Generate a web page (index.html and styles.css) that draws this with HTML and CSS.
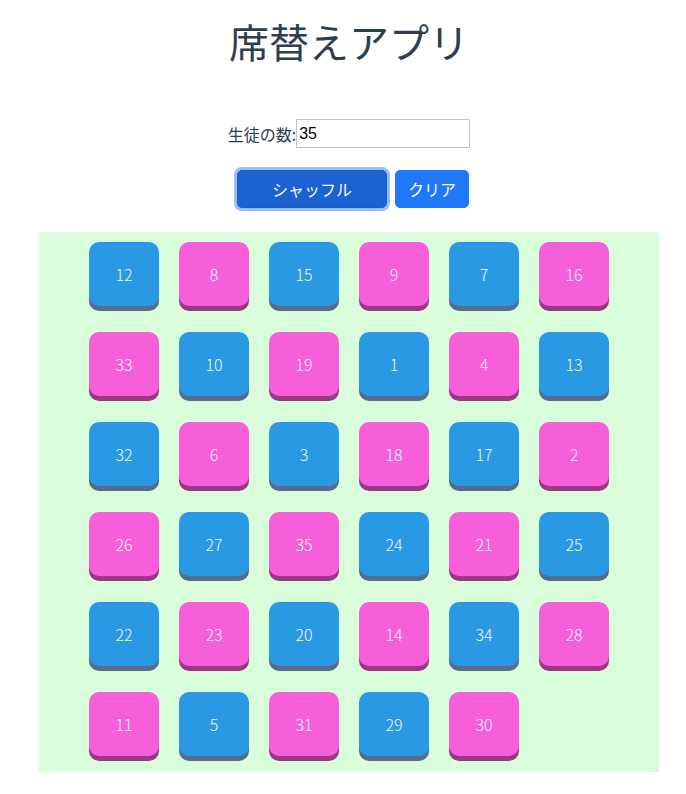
FILE: index.html
```html
<!DOCTYPE html>
<html lang="ja">
<head>
<meta charset="utf-8">
<title>席替えアプリ</title>
<link rel="stylesheet" href="styles.css">
</head>
<body>
<div class="app">
  <h1 class="title">席替えアプリ</h1>
  <div class="form-row">
    <label class="label" for="count">生徒の数:</label><input id="count" class="count-input" type="text" value="35">
  </div>
  <div class="btn-row">
    <button class="btn btn-shuffle">シャッフル</button>
    <button class="btn btn-clear">クリア</button>
  </div>
  <div class="board">
    <div class="grid">
      <div class="seat"><div class="tile blue">12</div></div>
      <div class="seat"><div class="tile pink">8</div></div>
      <div class="seat"><div class="tile blue">15</div></div>
      <div class="seat"><div class="tile pink">9</div></div>
      <div class="seat"><div class="tile blue">7</div></div>
      <div class="seat"><div class="tile pink">16</div></div>

      <div class="seat"><div class="tile pink">33</div></div>
      <div class="seat"><div class="tile blue">10</div></div>
      <div class="seat"><div class="tile pink">19</div></div>
      <div class="seat"><div class="tile blue">1</div></div>
      <div class="seat"><div class="tile pink">4</div></div>
      <div class="seat"><div class="tile blue">13</div></div>

      <div class="seat"><div class="tile blue">32</div></div>
      <div class="seat"><div class="tile pink">6</div></div>
      <div class="seat"><div class="tile blue">3</div></div>
      <div class="seat"><div class="tile pink">18</div></div>
      <div class="seat"><div class="tile blue">17</div></div>
      <div class="seat"><div class="tile pink">2</div></div>

      <div class="seat"><div class="tile pink">26</div></div>
      <div class="seat"><div class="tile blue">27</div></div>
      <div class="seat"><div class="tile pink">35</div></div>
      <div class="seat"><div class="tile blue">24</div></div>
      <div class="seat"><div class="tile pink">21</div></div>
      <div class="seat"><div class="tile blue">25</div></div>

      <div class="seat"><div class="tile blue">22</div></div>
      <div class="seat"><div class="tile pink">23</div></div>
      <div class="seat"><div class="tile blue">20</div></div>
      <div class="seat"><div class="tile pink">14</div></div>
      <div class="seat"><div class="tile blue">34</div></div>
      <div class="seat"><div class="tile pink">28</div></div>

      <div class="seat"><div class="tile pink">11</div></div>
      <div class="seat"><div class="tile blue">5</div></div>
      <div class="seat"><div class="tile pink">31</div></div>
      <div class="seat"><div class="tile blue">29</div></div>
      <div class="seat"><div class="tile pink">30</div></div>
    </div>
  </div>
</div>
</body>
</html>
```

FILE: styles.css
```css
html, body {
  margin: 0;
  padding: 0;
  background: #ffffff;
}

.app {
  padding-left: 12px;
  font-family: "Noto Sans CJK JP", "Noto Sans", sans-serif;
  color: #2c3e50;
  text-align: center;
}

.title {
  margin: 12px 0 0;
  font-size: 40px;
  line-height: 58px;
  font-weight: 400;
  color: #2c3e50;
}

.form-row {
  margin-top: 49px;
  display: flex;
  justify-content: center;
  align-items: center;
  height: 29px;
}

.label {
  font-size: 16px;
  color: #2c3e50;
}

.count-input {
  box-sizing: border-box;
  width: 174px;
  height: 29px;
  margin: 0;
  padding: 1px 2px;
  border: 1px solid #c4c4c4;
  font-family: "Liberation Sans", Arial, sans-serif;
  font-size: 16px;
  color: #000;
  background: #fff;
  outline: none;
}

.btn-row {
  margin-top: 22px;
  display: flex;
  justify-content: center;
  gap: 8px;
  padding-left: 8px;
}

.btn {
  box-sizing: border-box;
  height: 38px;
  padding: 6px 12px;
  border: 1px solid transparent;
  border-radius: 5px;
  font-family: "Noto Sans CJK JP", sans-serif;
  font-size: 16px;
  line-height: 24px;
  color: #ffffff;
  cursor: pointer;
}

.btn-shuffle {
  width: 150px;
  background: #1b62d0;
  border-color: #1a5cc6;
  box-shadow: 0 0 0 3px #95bff9;
}

.btn-clear {
  width: 74px;
  background: #1f78f6;
  border-color: #1f78f6;
}

.board {
  margin: 24px auto 0;
  width: 620px;
  background: #d9fcda;
  padding: 10px 0;
}

.grid {
  display: grid;
  grid-template-columns: repeat(6, 70px);
  grid-auto-rows: 70px;
  gap: 20px;
  justify-content: center;
}

.tile {
  height: 64px;
  border-radius: 10px;
  display: flex;
  align-items: center;
  justify-content: center;
  color: #f4f8ff;
  font-family: "Noto Sans CJK JP", "Noto Sans", sans-serif;
  font-weight: 300;
  font-size: 16px;
}

.tile.blue {
  background: #2a99e4;
  box-shadow: 0 5px 0 #586b8b;
}

.tile.pink {
  background: #f65fd9;
  box-shadow: 0 5px 0 #9a3886;
}
```
